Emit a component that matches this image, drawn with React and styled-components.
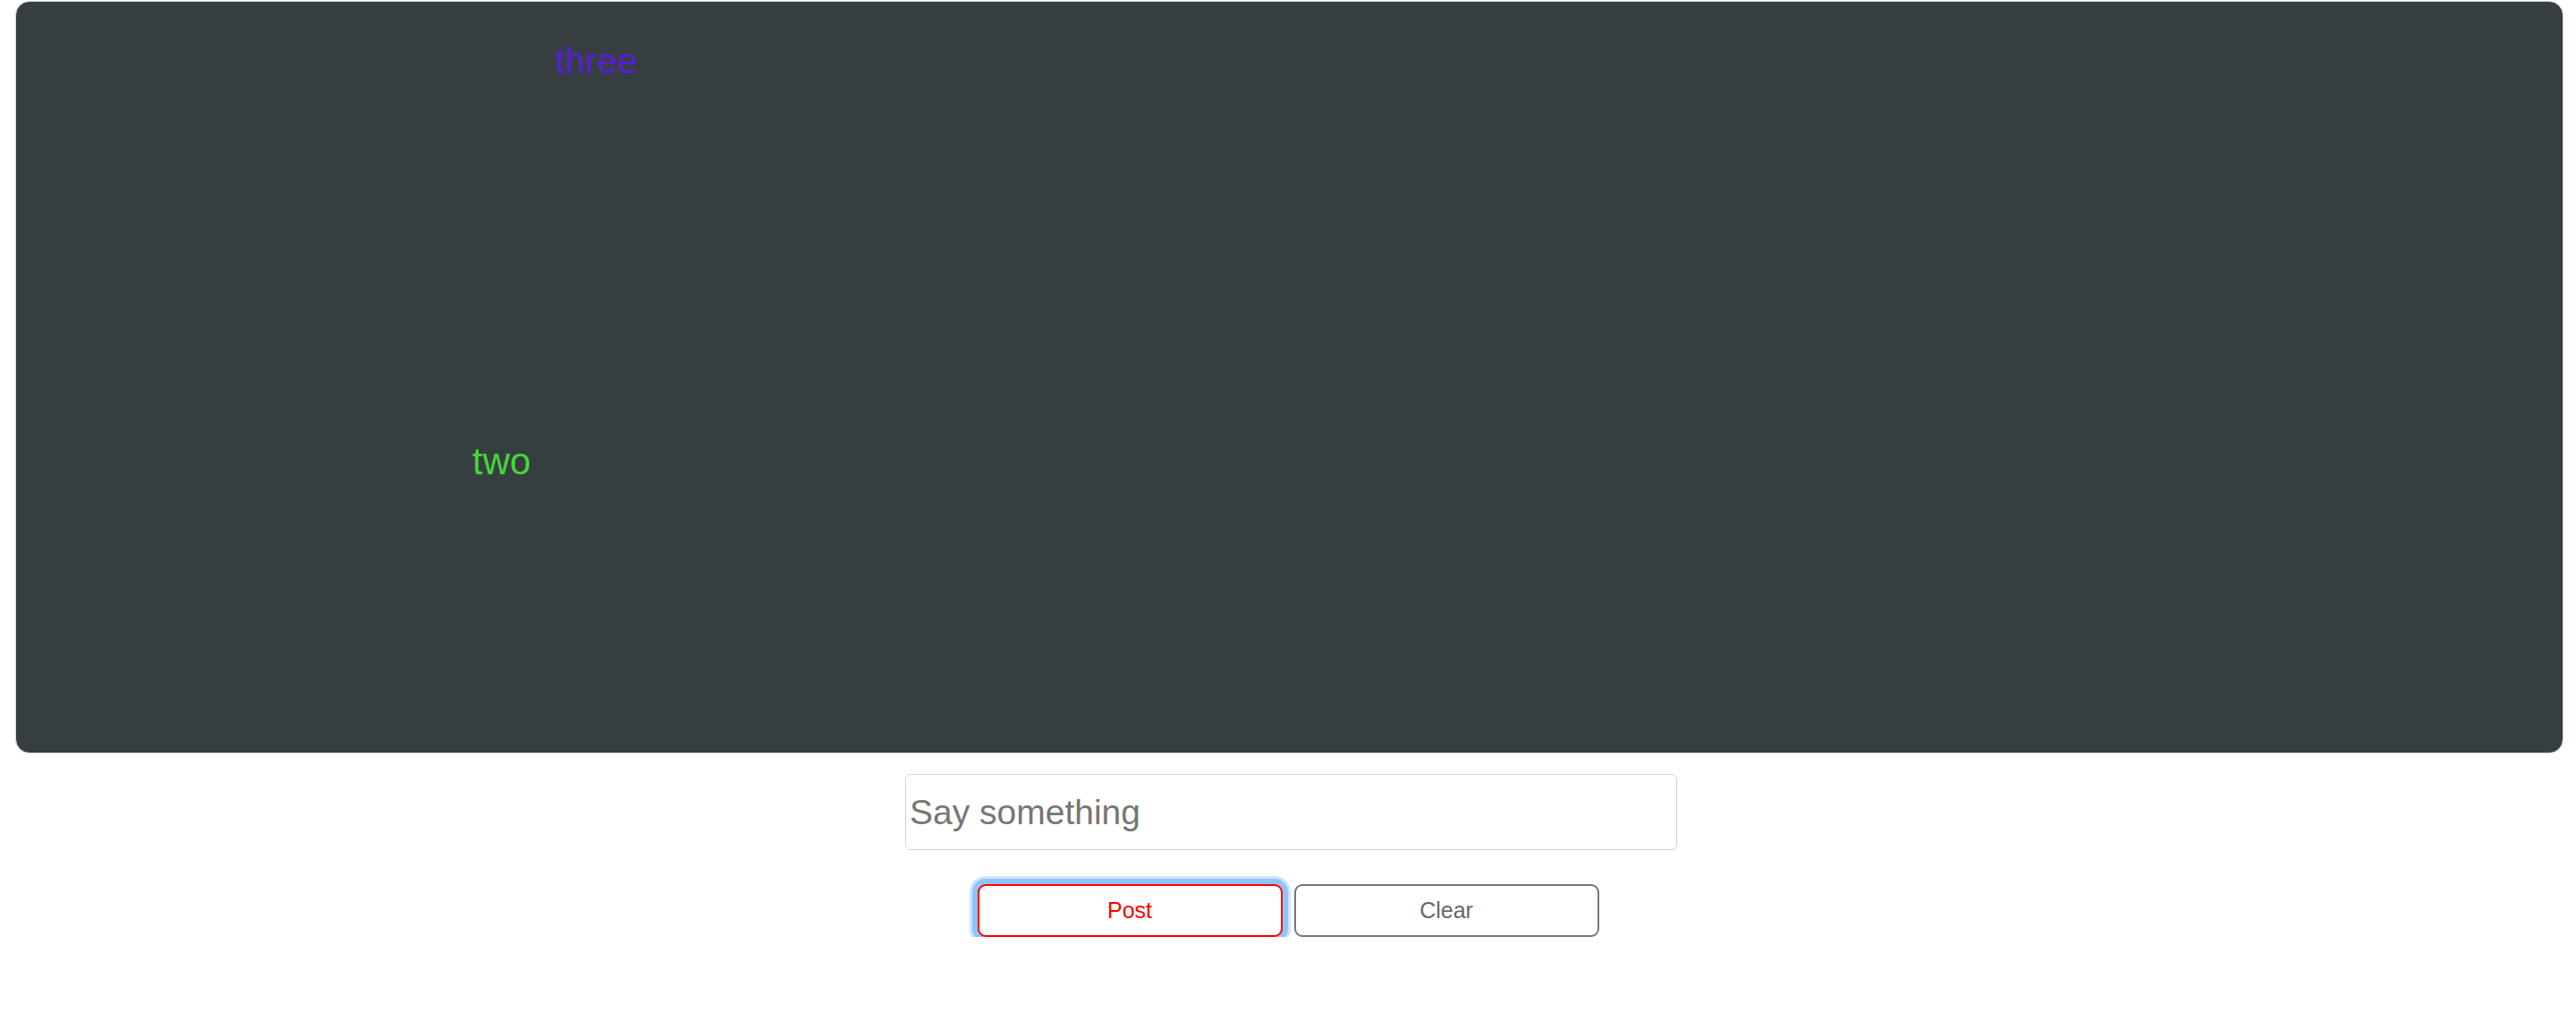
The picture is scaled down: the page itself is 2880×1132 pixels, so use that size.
import React from "react";
import styled, { createGlobalStyle } from "styled-components";

const GlobalStyle = createGlobalStyle`
	body {
		margin: 0;
		background: #fff;
		font-family: "Liberation Sans", Arial, sans-serif;
	}
`;

const Page = styled.main`
	display: flex;
	flex-direction: column;
	align-items: center;
	padding: 1px 14px 0 17px;
`;

const Board = styled.section`
	position: relative;
	align-self: stretch;
	height: 839px;
	background: #373e41;
	border: 1px solid #dcdcdc;
	border-radius: 16px;
`;

const Message = styled.span`
	position: absolute;
	font-size: ${(p) => p.size}px;
	line-height: 1;
	color: ${(p) => p.color};
	white-space: nowrap;
`;

const Input = styled.input`
	box-sizing: border-box;
	width: 863px;
	height: 85px;
	margin: 23px 0 0 4px;
	padding: 0 4px;
	border: 1px solid #d2d2d2;
	border-radius: 6px;
	font-family: inherit;
	font-size: 39px;
	color: #333;
	outline: none;

	&::placeholder {
		color: #767676;
	}
`;

const Actions = styled.div`
	display: flex;
	gap: 13px;
	margin-top: 38px;
	margin-left: -3px;
`;

const Button = styled.button`
	box-sizing: border-box;
	width: 341px;
	height: 59px;
	background: #fff;
	border: 2px solid ${(p) => (p.primary ? "#f00" : "#777")};
	border-radius: 9px;
	color: ${(p) => (p.primary ? "#f00" : "#666")};
	font-family: inherit;
	font-size: 25px;
	cursor: pointer;
	box-shadow: ${(p) =>
		p.focused
			? "0 0 0 6px #8fc3fb, 0 0 0 9px rgba(143, 195, 251, 0.45)"
			: "none"};
`;

const messages = [
	{ text: "three", color: "#561fd4", size: 40, left: 603, top: 46 },
	{ text: "two", color: "#45d63a", size: 42, left: 510, top: 493 },
];

const App = () => {
	return (
		<>
			<GlobalStyle />
			<Page>
				<Board>
					{messages.map((m) => (
						<Message
							key={m.text}
							color={m.color}
							size={m.size}
							style={{ left: m.left, top: m.top }}
						>
							{m.text}
						</Message>
					))}
				</Board>
				<Input placeholder="Say something" />
				<Actions>
					<Button primary focused>
						Post
					</Button>
					<Button>Clear</Button>
				</Actions>
			</Page>
		</>
	);
};

export default App;
